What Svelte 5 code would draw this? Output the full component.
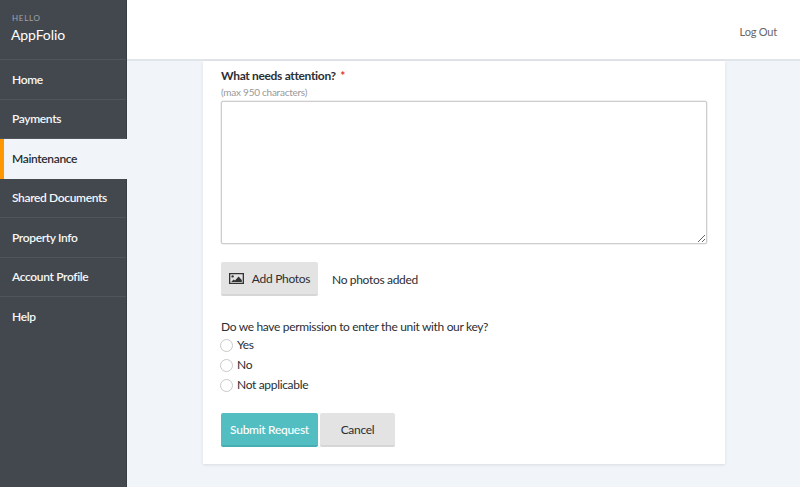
<script>
	const navItems = ['Home', 'Payments', 'Maintenance', 'Shared Documents', 'Property Info', 'Account Profile', 'Help'];
	const activeItem = 'Maintenance';
	const entryOptions = ['Yes', 'No', 'Not applicable'];
</script>

<div class="layout">
	<aside class="sidebar">
		<div class="greeting">
			<div class="hello">HELLO</div>
			<div class="company">AppFolio</div>
		</div>
		<nav>
			{#each navItems as item}
				<a href="#top" class="nav-item" class:active={item === activeItem}>{item}</a>
			{/each}
		</nav>
	</aside>

	<div class="main">
		<header class="topbar">
			<a href="#top" class="logout">Log Out</a>
		</header>

		<div class="content">
			<form class="card">
				<label class="field-label" for="attention">What needs attention? <span class="required">*</span></label>
				<div class="hint">(max 950 characters)</div>
				<textarea id="attention"></textarea>

				<div class="photos">
					<button type="button" class="btn btn-grey add-photos">
						<svg width="15" height="11" viewBox="0 0 15 11" aria-hidden="true">
							<path fill="#333" fill-rule="evenodd" d="M0 0h15v11H0zM1.3 1.3v8.4h12.4V1.3z" />
							<circle cx="3.6" cy="3.4" r="1.2" fill="#333" />
							<path fill="#333" d="M2.2 9l2.4-2.6 1.4 1.2L9.6 3.6 12.8 7v2z" />
						</svg>
						Add Photos
					</button>
					<span>No photos added</span>
				</div>

				<div class="question">Do we have permission to enter the unit with our key?</div>
				<div class="options">
					{#each entryOptions as option}
						<label class="option">
							<input type="radio" name="entry" value={option} />
							<span class="option-text">{option}</span>
						</label>
					{/each}
				</div>

				<div class="actions">
					<button type="button" class="btn btn-submit">Submit Request</button>
					<button type="button" class="btn btn-grey btn-cancel">Cancel</button>
				</div>
			</form>
		</div>
	</div>
</div>

<style>
	:global(body) {
		margin: 0;
		font-family: 'Lato', 'Noto Sans', sans-serif;
		color: #2b2e33;
	}
	.layout {
		display: flex;
		width: 800px;
		height: 487px;
		overflow: hidden;
		background: #f1f5f9;
	}
	.sidebar {
		width: 127px;
		flex: none;
		background: #43474e;
		box-sizing: border-box;
		border-right: 1px solid #3a3d43;
	}
	.greeting {
		height: 60px;
		box-sizing: border-box;
		padding: 13px 0 0 11px;
		border-bottom: 1px solid #50545b;
	}
	.hello {
		font-size: 8px;
		line-height: 10px;
		letter-spacing: 0.7px;
		color: #a2a5a9;
		padding-left: 1px;
	}
	.company {
		font-size: 14px;
		line-height: 18px;
		margin-top: 3px;
		color: #fff;
		letter-spacing: -0.1px;
	}
	nav {
		display: flex;
		flex-direction: column;
	}
	.nav-item {
		height: 39.5px;
		box-sizing: border-box;
		display: flex;
		align-items: center;
		padding-left: 12px;
		font-size: 12px;
		font-weight: 600;
		letter-spacing: -0.35px;
		color: #f6f7f8;
		text-decoration: none;
		border-bottom: 1px solid #50545b;
	}
	.nav-item:last-child {
		border-bottom: none;
	}
	.nav-item.active {
		background: #f1f5f9;
		color: #2b2e33;
		border-left: 4px solid #ff9800;
		border-bottom: none;
		padding-left: 8px;
		width: 127px;
	}
	.main {
		flex: 1;
		display: flex;
		flex-direction: column;
		min-width: 0;
	}
	.topbar {
		height: 61px;
		flex: none;
		box-sizing: border-box;
		background: #fff;
		border-bottom: 2px solid #e1e4e8;
		display: flex;
		align-items: center;
		justify-content: flex-end;
		padding: 3px 23px 0 0;
	}
	.logout {
		font-size: 11px;
		letter-spacing: -0.2px;
		color: #666;
		text-decoration: none;
	}
	.content {
		padding-left: 76px;
	}
	.card {
		width: 522px;
		height: 403px;
		box-sizing: border-box;
		background: #fff;
		padding: 7px 18px 0;
		box-shadow: 0 1px 3px rgba(0, 0, 0, 0.1);
		font-size: 12px;
		letter-spacing: -0.33px;
	}
	.field-label {
		display: block;
		font-weight: 700;
		font-size: 12px;
		line-height: 16px;
		color: #2d2f33;
	}
	.required {
		color: #e03030;
		margin-left: 2px;
	}
	.hint {
		font-size: 10px;
		letter-spacing: -0.25px;
		line-height: 14px;
		color: #999;
		margin-top: 1px;
	}
	textarea {
		display: block;
		width: 486px;
		height: 143px;
		box-sizing: border-box;
		margin: 2px 0 0;
		border: 1px solid #cdcdcd;
		border-radius: 2px;
		background: #fff;
		outline: none;
		box-shadow: 0 0 0 0.5px #e2e2e2;
	}
	.photos {
		display: flex;
		align-items: center;
		gap: 14px;
		margin-top: 18px;
	}
	.btn {
		height: 34px;
		box-sizing: border-box;
		border: none;
		border-bottom: 2px solid transparent;
		border-radius: 2px;
		font-family: inherit;
		font-size: 12px;
		letter-spacing: -0.3px;
		display: inline-flex;
		align-items: center;
		justify-content: center;
		padding: 0;
	}
	.btn-grey {
		background: #e3e3e3;
		border-bottom-color: #d6d6d6;
		color: #2b2e33;
	}
	.add-photos {
		width: 97px;
		gap: 8px;
	}
	.question {
		margin-top: 23px;
		line-height: 16px;
	}
	.options {
		display: flex;
		flex-direction: column;
		gap: 4px;
		margin-top: 2px;
	}
	.option {
		display: flex;
		align-items: center;
		gap: 4px;
		height: 16px;
	}
	.option-text {
		margin-top: -1px;
	}
	input[type='radio'] {
		appearance: none;
		width: 13px;
		height: 13px;
		margin: 0 0 0 -1px;
		border: 1px solid #c9c9c9;
		border-radius: 50%;
		background: #fff;
	}
	.actions {
		display: flex;
		gap: 2px;
		margin-top: 20px;
	}
	.btn-submit {
		width: 97px;
		background: #52bec2;
		border-bottom-color: #45aeb2;
		color: #fff;
		font-weight: 500;
	}
	.btn-cancel {
		width: 75px;
	}
</style>
